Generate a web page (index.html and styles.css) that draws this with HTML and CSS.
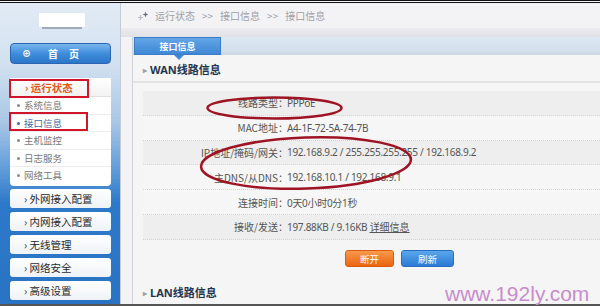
FILE: index.html
```html
<!DOCTYPE html>
<html lang="zh">
<head>
<meta charset="utf-8">
<title>接口信息</title>
<link rel="stylesheet" href="styles.css">
</head>
<body>
<div class="frame">
  <aside class="sidebar">
    <div class="logo"><div class="logo-box"></div><div class="logo-sub"></div></div>
    <div class="home"><span class="home-ico">⊕</span><span class="home-txt">首</span><span class="home-txt">页</span></div>
    <div class="panel">
      <div class="panel-head">› 运行状态</div>
      <ul class="sub">
        <li>系统信息</li>
        <li class="active">接口信息</li>
        <li>主机监控</li>
        <li>日志服务</li>
        <li>网络工具</li>
      </ul>
    </div>
    <div class="navs">
      <div class="nav">› 外网接入配置</div>
      <div class="nav">› 内网接入配置</div>
      <div class="nav">› 无线管理</div>
      <div class="nav">› 网络安全</div>
      <div class="nav">› 高级设置</div>
    </div>
  </aside>
  <main class="main">
    <div class="crumb">
      <svg class="crumb-ico" width="12" height="10" viewBox="0 0 12 10"><path d="M1 6.5h5M3.5 4v5" stroke="#b8bcc4" stroke-width="1.2"/><path d="M8.5 0.5l0.8 2.2 2.2 0.8-2.2 0.8-0.8 2.2-0.8-2.2-2.2-0.8 2.2-0.8z" fill="#667080"/></svg>
      <span>运行状态</span><span class="sep">&gt;&gt;</span><span>接口信息</span><span class="sep">&gt;&gt;</span><span>接口信息</span>
    </div>
    <div class="band"></div>
    <div class="tabbar"><div class="tab">接口信息</div></div>
    <div class="content">
      <div class="sec-title"><span class="tri">▸</span>WAN线路信息</div>
      <div class="rows">
        <div class="row shade"><span class="lbl">线路类型</span><span class="colon">：</span><span class="val">PPPoE</span></div>
        <div class="row"><span class="lbl">MAC地址</span><span class="colon">：</span><span class="val">A4-1F-72-5A-74-7B</span></div>
        <div class="row shade"><span class="lbl">IP地址/掩码/网关</span><span class="colon">：</span><span class="val">192.168.9.2 / 255.255.255.255 / 192.168.9.2</span></div>
        <div class="row"><span class="lbl">主DNS/从DNS</span><span class="colon">：</span><span class="val">192.168.10.1 / 192.168.9.1</span></div>
        <div class="row"><span class="lbl">连接时间</span><span class="colon">：</span><span class="val">0天0小时0分1秒</span></div>
        <div class="row shade"><span class="lbl">接收/发送</span><span class="colon">：</span><span class="val">197.88KB / 9.16KB <a class="more">详细信息</a></span></div>
      </div>
      <div class="actions"><div class="btn orange">断开</div><div class="btn blue">刷新</div></div>
      <div class="sec-title lan"><span class="tri">▸</span>LAN线路信息</div>
    </div>
  </main>
</div>
<div class="mark mark1"></div>
<div class="mark mark2"></div>
<svg class="ovals" width="600" height="306" viewBox="0 0 600 306">
  <ellipse cx="274.5" cy="108" rx="67" ry="10.5" fill="none" stroke="#9e1424" stroke-width="2.5"/>
  <ellipse cx="306" cy="163" rx="105" ry="25.5" fill="none" stroke="#9e1424" stroke-width="2.5" transform="rotate(-2 306 163)"/>
</svg>
<div class="watermark">www.192ly.com</div>
</body>
</html>
```
FILE: styles.css
```css
* { box-sizing: border-box; margin: 0; padding: 0; }
html, body { width: 600px; height: 306px; overflow: hidden; }
body {
  position: relative;
  font-family: "Noto Sans CJK SC", "Noto Sans", sans-serif;
  font-size: 10px;
  color: #444;
  background: #f3f3f5;
}
.frame {
  display: flex;
  height: 306px;
  border-top: 3px double #111;
  border-bottom: 2px solid #555;
}
.sidebar {
  width: 121px;
  flex: none;
  display: flex;
  flex-direction: column;
  padding-left: 10px;
  padding-right: 9px;
  background: linear-gradient(#e2ebf5 0, #d2e1f0 60px, #a8c6e6 120px, #5b98d8 170px, #2d79c9 200px, #2a73c4 100%);
  border-right: 1px solid #c4ccd6;
}
.logo { height: 40px; display: flex; flex-direction: column; align-items: center; padding-top: 10px; padding-left: 2px; }
.logo-box { width: 46px; height: 14px; background: #fff; }
.logo-sub { width: 40px; height: 2px; background: #7a8290; opacity: .6; }
.home {
  height: 21px;
  border-radius: 4px;
  background: linear-gradient(#78b6ee, #3f8ddc 50%, #2c76c8);
  border: 1px solid #2a66b4;
  display: flex;
  align-items: center;
  color: #fff;
  font-weight: bold;
  font-size: 10px;
  padding-left: 11px;
}
.home-ico { width: 26px; font-size: 9px; }
.home-txt { width: 21px; }
.panel {
  margin-top: 14px;
  height: 108px;
  background: #fff;
  border-radius: 4px;
  display: flex;
  flex-direction: column;
}
.panel-head {
  height: 19px;
  line-height: 19px;
  padding-left: 15px;
  color: #e45c1a;
  font-weight: bold;
  font-size: 10.5px;
  background: linear-gradient(#fff, #f2f2f2);
  border-bottom: 1px solid #e0e0e0;
}
.sub { list-style: none; }
.sub li {
  height: 17.6px;
  line-height: 17px;
  padding-left: 14px;
  color: #777;
  font-size: 9.5px;
  border-bottom: 1px solid #ececec;
  position: relative;
}
.sub li:last-child { border-bottom: none; }
.sub li::before {
  content: "";
  position: absolute;
  left: 7px;
  top: 7px;
  width: 3px;
  height: 3px;
  border-radius: 50%;
  background: #8a8a8a;
}
.sub li.active { color: #3a6aa8; }
.sub li.active::before { background: #3a6aa8; }
.navs { display: flex; flex-direction: column; gap: 4px; margin-top: 3px; }
.nav {
  height: 19px;
  line-height: 19px;
  padding-left: 14px;
  border-radius: 3px;
  background: linear-gradient(#ffffff, #eef2f6);
  color: #2a2a2a;
  font-size: 10.5px;
}
.main {
  flex: 1;
  display: flex;
  flex-direction: column;
  background: #f3f3f5;
  padding-left: 11px;
}
.crumb {
  height: 25px;
  display: flex;
  align-items: center;
  gap: 6px;
  color: #a0a0a8;
  font-size: 10px;
  margin-left: -11px;
  padding-left: 16px;
}
.sep { padding: 0 1px; }
.band {
  height: 9px;
  margin-left: -11px;
  background: linear-gradient(#ececef, #e0e1e6);
}
.tabbar {
  height: 18px;
  background: linear-gradient(#dce8f2, #d4e0ec 70%, #ccd6e2);
  border-left: 1px solid #c8d0da;
  display: flex;
  padding-left: 1px;
}
.tab {
  width: 87px;
  position: relative;
  background: linear-gradient(#62a6e6, #3f88d6);
  color: #fff;
  font-size: 9px;
  font-weight: bold;
  text-align: center;
  line-height: 17px;
  border: 1px solid #3a7cc8;
}
.tab::after {
  content: "";
  position: absolute;
  left: 39px;
  bottom: -6px;
  border-left: 5px solid transparent;
  border-right: 5px solid transparent;
  border-top: 5px solid #3f88d6;
}
.content {
  flex: 1;
  background: #f5f5f5;
  border-left: 1px solid #d0d4da;
  display: flex;
  flex-direction: column;
}
.sec-title {
  height: 28px;
  line-height: 30px;
  padding-left: 10px;
  font-weight: bold;
  font-size: 11px;
  color: #1e3552;
  border-bottom: 2px solid #e2e2e4;
  font-family: "Noto Sans", "Noto Sans CJK SC", sans-serif;
}
.tri { color: #9aa0a8; font-size: 8px; margin-right: 3px; vertical-align: 1px; }
.rows { margin-top: 8px; margin-left: 10px; }
.row {
  height: 24.8px;
  display: flex;
  align-items: center;
  border-bottom: 1px dotted #d4d4d4;
  background: #f6f6f6;
}
.row.shade { background: #eeeeee; }
.lbl {
  width: 135px;
  text-align: right;
  color: #555;
  font-size: 10px;
  white-space: nowrap;
}
.colon { width: 9px; text-align: center; color: #555; }
.val {
  font-family: "Noto Sans", "Noto Sans CJK SC", sans-serif;
  font-size: 10px;
  letter-spacing: -0.3px;
  color: #555;
  white-space: nowrap;
}
.more { color: #555; text-decoration: underline; letter-spacing: 0; font-family: "Noto Sans CJK SC", sans-serif; }
.actions {
  display: flex;
  gap: 7px;
  margin-top: 10px;
  padding-left: 212px;
}
.btn {
  height: 17px;
  line-height: 16px;
  text-align: center;
  color: #fff;
  font-size: 9.5px;
  border-radius: 3px;
}
.btn.orange { width: 49px; background: linear-gradient(#f79a4c, #ec6410); border: 1px solid #d85a10; }
.btn.blue { width: 53px; background: linear-gradient(#5aa6ec, #2c7ad4); border: 1px solid #2a6cc0; }
.sec-title.lan { border-bottom: none; margin-top: 16px; height: 20px; line-height: 20px; }
.mark {
  position: absolute;
  border: 2px solid #d2162a;
}
.mark1 { left: 9px; top: 79px; width: 80px; height: 19px; }
.mark2 { left: 9px; top: 112px; width: 79px; height: 19px; }
.ovals { position: absolute; left: 0; top: 0; pointer-events: none; }
.watermark {
  position: absolute;
  left: 445px;
  top: 282px;
  font-family: "Liberation Sans", Arial, sans-serif;
  font-size: 21px;
  color: #c88cce;
  line-height: 24px;
}
```
